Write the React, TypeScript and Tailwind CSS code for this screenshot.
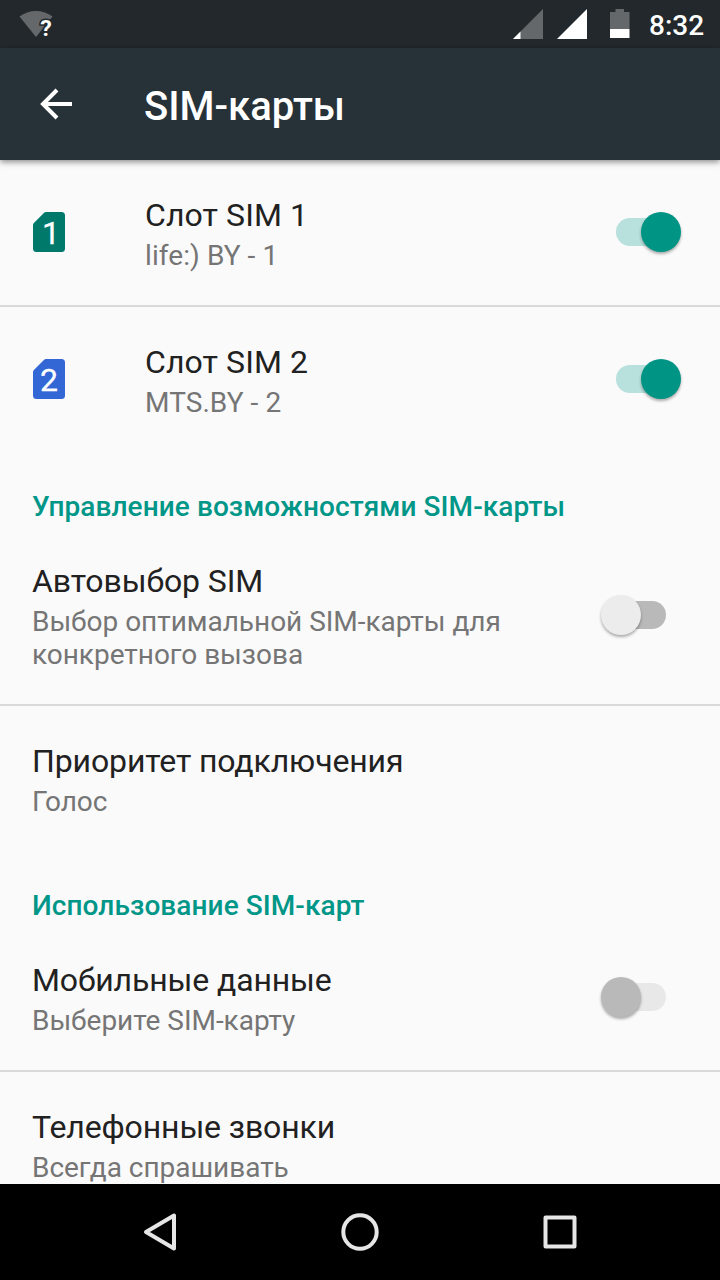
import React from 'react'
import clsx from 'clsx'

type ToggleProps = {
  on?: boolean
  disabled?: boolean
}

const Toggle = ({ on, disabled }: ToggleProps) => {
  return (
    <div
      role="switch"
      aria-checked={!!on}
      className={clsx('mr-[39px] mb-px flex h-10 w-20 shrink-0 items-center', on ? 'justify-end' : 'justify-start')}
    >
      <div
        className={clsx(
          'flex h-7 w-[50px] items-center rounded-full',
          on && 'mr-[15px] justify-end bg-[#b8e0dc]',
          !on && 'ml-[15px] justify-start',
          !on && (disabled ? 'bg-[#e8e8e8]' : 'bg-[#b9b9b9]')
        )}
      >
        <div
          className={clsx(
            'size-10 shrink-0 rounded-full shadow-[0_2px_3px_rgba(0,0,0,0.32)]',
            on && '-mr-[15px] bg-[#009485]',
            !on && '-ml-[15px]',
            !on && (disabled ? 'bg-[#b9b9b9]' : 'bg-[#ececec]')
          )}
        />
      </div>
    </div>
  )
}

type SimIconProps = {
  slot: number
  color: string
}

const SimIcon = ({ slot, color }: SimIconProps) => {
  return (
    <svg width="32" height="40" viewBox="0 0 32 40" className="mb-px shrink-0">
      <path d="M13 0H28.500a3.500 3.500 0 0 1 3.500 3.500V36.500a3.500 3.500 0 0 1-3.500 3.500H3.500a3.500 3.500 0 0 1-3.500-3.500V13.200q0-1.200.9-2.100L10.900.9Q11.800 0 13 0Z" fill={color} />
      <text x={slot === 1 ? 18 : 16} y="32" textAnchor="middle" fontSize="32" fill="#fff" stroke="#fff" strokeWidth="0.300">
        {slot}
      </text>
    </svg>
  )
}

type RowProps = {
  title: string
  summary: string
  icon?: React.ReactNode
  toggle?: React.ReactNode
  divider?: boolean
}

const Row = ({ title, summary, icon, toggle, divider }: RowProps) => {
  return (
    <div className={clsx('flex shrink-0 items-center', divider && 'border-b-2 border-[#dadada]')}>
      {icon && <div className="flex w-[113px] shrink-0 pl-[33px]">{icon}</div>}
      <div className="min-w-0 flex-1 pt-9 pr-6 pb-[33px] pl-8">
        <div
          className={clsx(
            'text-[32px] leading-[38px] text-[#212121]',
            icon ? 'tracking-[0.1px]' : 'tracking-[-0.12px]'
          )}
        >
          {title}
        </div>
        <div
          className={clsx(
            'mt-[5px] text-[28px] leading-[33px] whitespace-pre-line text-[#757575]',
            icon ? 'tracking-[0.08px]' : 'tracking-[-0.03px]'
          )}
        >
          {summary}
        </div>
      </div>
      {toggle}
    </div>
  )
}

const SectionTitle = ({ children }: { children: React.ReactNode }) => {
  return (
    <div className="h-[74px] shrink-0 pt-[38px] pl-8 text-[28px] leading-[33px] font-medium tracking-[0.08px] text-[#009688]">
      {children}
    </div>
  )
}

const StatusBar = () => {
  return (
    <div className="flex h-12 shrink-0 items-start bg-[#22282c] text-white">
      <svg width="40" height="48" viewBox="0 0 40 48" className="ml-4">
        <path d="M3.500 16.500C13 9 27 9 36.500 16.500L20 37Z" fill="#64686b" />
        {/* wider glyph than the default so it reads at this size */}
        <text x="24.300" y="36" fontSize="21.500" fontWeight="700" textLength="11.500" lengthAdjust="spacingAndGlyphs" fill="#fff" stroke="#22282c" strokeWidth="3" paintOrder="stroke">
          ?
        </text>
      </svg>
      <svg width="30" height="48" viewBox="0 0 30 48" className="ml-auto">
        <path d="M0 39L30 9V39Z" fill="#64686b" />
        <path d="M0 39L7.500 31.500V39Z" fill="#fff" />
      </svg>
      <svg width="30" height="48" viewBox="0 0 30 48" className="ml-[14px]">
        <path d="M0 39L30 9V39Z" fill="#fff" />
      </svg>
      <svg width="20" height="48" viewBox="0 0 20 48" className="ml-[23px]">
        <path d="M5.500 9H14V12H19.500V29H0V12H5.500Z" fill="#64686b" />
        <path d="M0 29H19.500V38H0Z" fill="#fff" />
      </svg>
      <div className="w-[90px] pl-[19px] text-[28px] leading-[52px] font-medium">8:32</div>
    </div>
  )
}

const NavBar = () => {
  return (
    <div className="flex h-24 shrink-0 items-center justify-center gap-[160px] bg-black">
      <svg width="40" height="40" viewBox="0 0 40 40" fill="none" stroke="#e6e6e6" strokeWidth="4" strokeLinejoin="round">
        <path d="M6 20L34 3.500V36.500Z" />
      </svg>
      <svg width="40" height="40" viewBox="0 0 40 40" fill="none" stroke="#e6e6e6" strokeWidth="4">
        <circle cx="20" cy="20" r="16.700" />
      </svg>
      <svg width="40" height="40" viewBox="0 0 40 40" fill="none" stroke="#e6e6e6" strokeWidth="4" strokeLinejoin="round">
        <path d="M5.500 5.500H34.500V34.500H5.500Z" />
      </svg>
    </div>
  )
}

const App = () => {
  return (
    <div className="flex h-[1280px] w-[720px] flex-col overflow-hidden bg-[#fafafa] font-['Roboto',sans-serif]">
      <StatusBar />
      <header className="z-10 flex h-28 shrink-0 items-center bg-[#263238] text-white shadow-[0_2px_6px_rgba(0,0,0,0.45)]">
        <svg width="32" height="32" viewBox="0 0 32 32" className="ml-10" fill="none" stroke="#fff" strokeWidth="4">
          <path d="M32 16H4M17 2L3 16L17 30" />
        </svg>
        <h1 className="ml-[72px] pt-1.5 text-[40px] leading-[48px] font-medium">SIM-карты</h1>
      </header>

      <main className="flex min-h-0 flex-1 flex-col overflow-hidden">
        <Row title="Слот SIM 1" summary="life:) BY - 1" icon={<SimIcon slot={1} color="#00796b" />} toggle={<Toggle on />} divider />
        <Row title="Слот SIM 2" summary="MTS.BY - 2" icon={<SimIcon slot={2} color="#3367d6" />} toggle={<Toggle on />} />

        <SectionTitle>Управление возможностями SIM-карты</SectionTitle>
        <Row
          title="Автовыбор SIM"
          summary={'Выбор оптимальной SIM-карты для\nконкретного вызова'}
          toggle={<Toggle />}
          divider
        />
        <Row title="Приоритет подключения" summary="Голос" />

        <SectionTitle>Использование SIM-карт</SectionTitle>
        <Row title="Мобильные данные" summary="Выберите SIM-карту" toggle={<Toggle disabled />} divider />
        <Row title="Телефонные звонки" summary="Всегда спрашивать" />
      </main>

      <NavBar />
    </div>
  )
}

export default App
